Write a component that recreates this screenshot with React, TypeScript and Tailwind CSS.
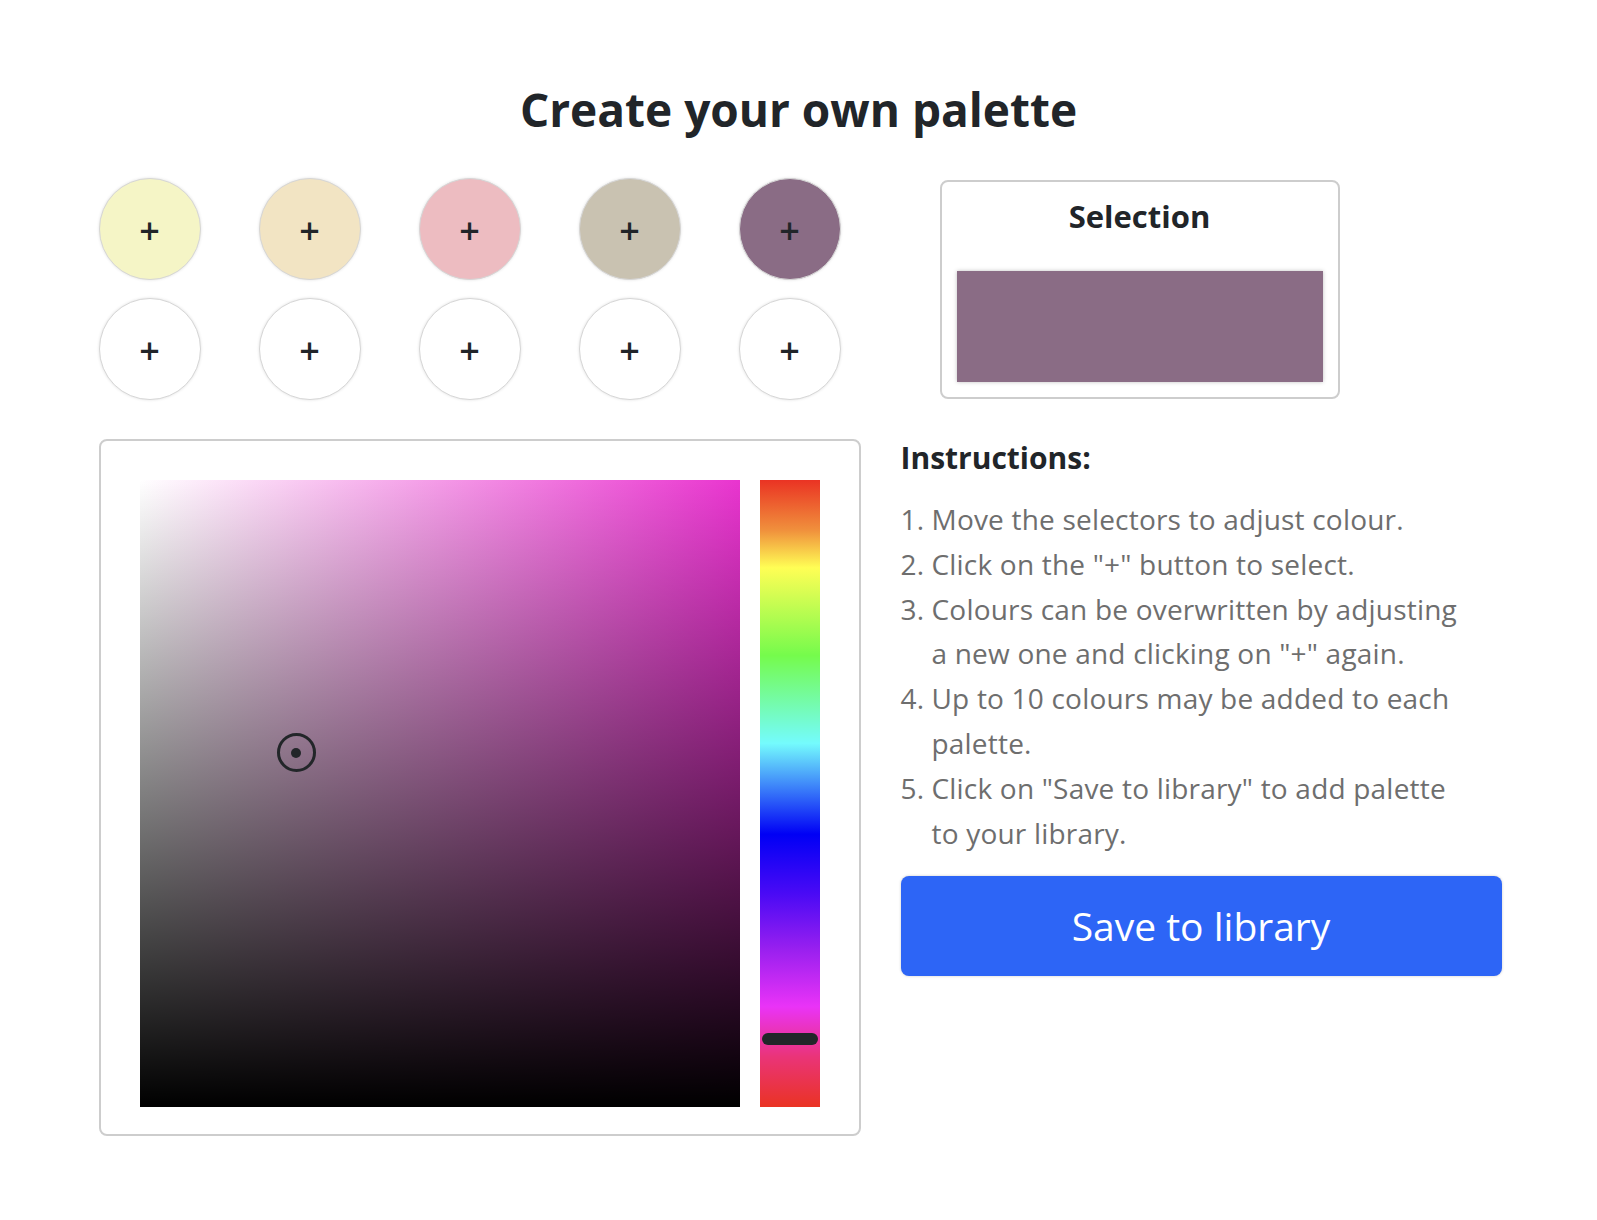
const swatches = ["#f5f5c6", "#f2e4c3", "#edbcc1", "#c9c2b1", "#8a6c85", "#ffffff", "#ffffff", "#ffffff", "#ffffff", "#ffffff"];

const steps = [
  ["1.", "Move the selectors to adjust colour."],
  ["2.", 'Click on the "+" button to select.'],
  ["3.", 'Colours can be overwritten by adjusting a new one and clicking on "+" again.'],
  ["4.", "Up to 10 colours may be added to each palette."],
  ["5.", 'Click on "Save to library" to add palette to your library.'],
];

const hueBar =
  "bg-[linear-gradient(to_bottom,#ea3323_0%,#f0903c_8%,#fffe55_14%,#75fb4c_28%,#74fbfd_42%,#0000f5_56.5%,#4a0af5_66%,#9a20ef_75%,#ea33f7_84%,#ea3478_92%,#ea3323_100%)]";

export default function App() {
  return (
    <main className="min-h-screen bg-white font-['Open_Sans',sans-serif] text-[#212529]">
      <div className="mx-auto w-[1400px] pt-[82px]">
        <h1 className="text-center text-[46px] font-bold leading-[54px]">Create your own palette</h1>

        <div className="mt-[42px] flex items-start">
          {/* palette slots */}
          <div className="grid w-[762px] grid-cols-[repeat(5,102px)] gap-x-[58px] gap-y-[18px]">
            {swatches.map((c, i) => (
              <button
                key={i}
                className="flex h-[102px] w-[102px] items-center justify-center rounded-full border border-[#d6d6d6] pt-[3px] text-[36px] font-semibold leading-none shadow-[0_0_3px_rgba(0,0,0,0.12)]"
                style={{ backgroundColor: c }}
              >
                +
              </button>
            ))}
          </div>

          <div className="ml-[79px] mt-[2px] w-[400px] rounded-lg border-2 border-[#cdcdcd] px-[15px] pb-[15px] pt-[14px]">
            <h2 className="text-center text-[31px] font-bold leading-[40px]">Selection</h2>
            <div className="mt-[35px] h-[111px] bg-[#8a6c85] shadow-[0_0_4px_rgba(0,0,0,0.25)]" />
          </div>
        </div>

        <div className="mt-[39px] flex gap-[40px]">
          {/* picker */}
          <div className="flex w-[762px] gap-[20px] rounded-lg border-2 border-[#cdcdcd] pb-[27px] pl-[39px] pr-[39px] pt-[39px]">
            <div className="relative h-[627px] w-[600px] bg-[linear-gradient(to_right,#ffffff,#e934cf)]">
              <div className="absolute inset-0 bg-[linear-gradient(to_bottom,transparent,#000000)]" />
              <div className="absolute left-[137px] top-[253px] flex h-[39px] w-[39px] items-center justify-center rounded-full border-[3px] border-[#222629]">
                <div className="h-[10px] w-[10px] rounded-full bg-[#222629]" />
              </div>
            </div>
            <div className={`relative h-[627px] w-[60px] ${hueBar}`}>
              <div className="absolute left-[2px] right-[2px] top-[553px] h-[12px] rounded-full bg-[#222629]" />
            </div>
          </div>

          {/* instructions */}
          <div className="w-[600px] pt-[1px]">
            <h3 className="text-[30px] font-bold leading-[36px]">Instructions:</h3>
            <ol className="mt-[21px] text-[28px] font-normal leading-[44.8px] tracking-[0.2px] text-[#6e6e6e]">
              {steps.map(([n, t]) => (
                <li key={n} className="flex">
                  <span className="w-[31px] shrink-0">{n}</span>
                  <span className="w-[545px]">{t}</span>
                </li>
              ))}
            </ol>
            <button className="mt-[21px] flex h-[100px] w-[601px] items-center justify-center rounded-lg bg-[#2d65f6] text-[39px] text-white shadow-[0_0_3px_rgba(0,0,0,0.2)]">
              Save to library
            </button>
          </div>
        </div>
      </div>
    </main>
  );
}
